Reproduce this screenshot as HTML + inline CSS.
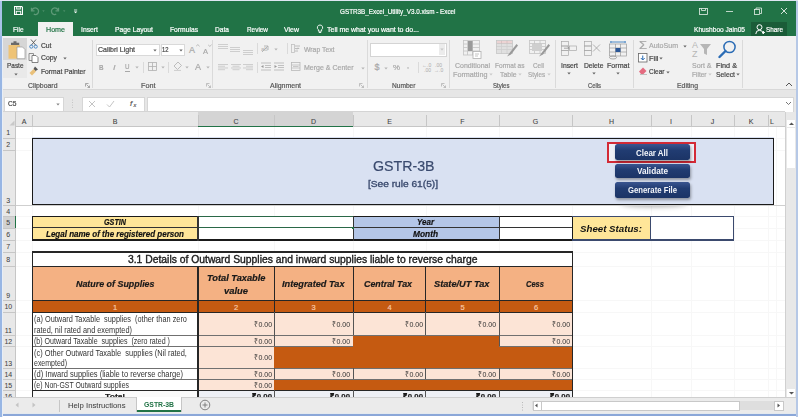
<!DOCTYPE html><html><head><meta charset="utf-8"><style>
html,body{margin:0;padding:0;width:798px;height:417px;overflow:hidden;background:#fff}
body{position:relative;font-family:"Liberation Sans",sans-serif}
.a{position:absolute}
.t{position:absolute;white-space:pre;-webkit-text-stroke:0.2px currentColor}
svg{position:absolute}
</style></head><body>
<div class="a" style="left:0px;top:0px;width:798px;height:417px;background:#ffffff;"></div>
<div class="a" style="left:0px;top:0px;width:798px;height:36px;background:#217346;"></div>
<div class="a" style="left:38px;top:22px;width:35px;height:14px;background:#f1f1f1;"></div>
<div class="a" style="left:751px;top:22px;width:36px;height:14px;background:#1a5c38;"></div>
<div class="a" style="left:0px;top:36px;width:798px;height:54px;background:#f1f1f1;"></div>
<div class="a" style="left:0px;top:89px;width:798px;height:1px;background:#d8d8d8;"></div>
<div class="a" style="left:0px;top:90px;width:798px;height:27px;background:#e6e6e6;"></div>
<div class="a" style="left:4px;top:96.5px;width:58px;height:14px;background:#fff;border:0.6px solid #d6d6d6"></div>
<div class="a" style="left:82px;top:96.5px;width:61px;height:14px;background:#fff;border:0.6px solid #d6d6d6"></div>
<div class="a" style="left:147px;top:96.5px;width:645px;height:14px;background:#fff;border:0.6px solid #d6d6d6"></div>
<div class="a" style="left:0px;top:113px;width:785px;height:13px;background:#f3f3f3;"></div>
<div class="a" style="left:0px;top:126px;width:785px;height:1px;background:#d4d4d4;"></div>
<div class="a" style="left:0px;top:126px;width:16px;height:272px;background:#f3f3f3;"></div>
<div class="a" style="left:15px;top:113px;width:1px;height:285px;background:#d4d4d4;"></div>
<div class="a" style="left:0px;top:397px;width:798px;height:16px;background:#f0f0f0;"></div>
<div class="a" style="left:0px;top:397px;width:798px;height:1px;background:#d4d4d4;"></div>
<div class="a" style="left:0px;top:413px;width:798px;height:2px;background:#8fa8d8;"></div>
<div class="a" style="left:0px;top:0px;width:1px;height:417px;background:#9ab6e4;"></div>
<div class="a" style="left:796px;top:0px;width:2px;height:417px;background:#9ab6e4;"></div>
<div class="a" style="left:16px;top:138px;width:769px;height:1px;background:#f7f7f7;"></div>
<div class="a" style="left:16px;top:150px;width:769px;height:1px;background:#f7f7f7;"></div>
<div class="a" style="left:16px;top:205px;width:769px;height:1px;background:#f7f7f7;"></div>
<div class="a" style="left:16px;top:216px;width:769px;height:1px;background:#f7f7f7;"></div>
<div class="a" style="left:16px;top:228px;width:769px;height:1px;background:#f7f7f7;"></div>
<div class="a" style="left:16px;top:240px;width:769px;height:1px;background:#f7f7f7;"></div>
<div class="a" style="left:16px;top:252px;width:769px;height:1px;background:#f7f7f7;"></div>
<div class="a" style="left:16px;top:266px;width:769px;height:1px;background:#f7f7f7;"></div>
<div class="a" style="left:16px;top:300px;width:769px;height:1px;background:#f7f7f7;"></div>
<div class="a" style="left:16px;top:312px;width:769px;height:1px;background:#f7f7f7;"></div>
<div class="a" style="left:16px;top:335px;width:769px;height:1px;background:#f7f7f7;"></div>
<div class="a" style="left:16px;top:346px;width:769px;height:1px;background:#f7f7f7;"></div>
<div class="a" style="left:16px;top:368px;width:769px;height:1px;background:#f7f7f7;"></div>
<div class="a" style="left:16px;top:379px;width:769px;height:1px;background:#f7f7f7;"></div>
<div class="a" style="left:16px;top:390px;width:769px;height:1px;background:#f7f7f7;"></div>
<div class="a" style="left:16px;top:402px;width:769px;height:1px;background:#f7f7f7;"></div>
<div class="a" style="left:32px;top:126px;width:1px;height:271px;background:#f7f7f7;"></div>
<div class="a" style="left:198px;top:126px;width:1px;height:271px;background:#f7f7f7;"></div>
<div class="a" style="left:274px;top:126px;width:1px;height:271px;background:#f7f7f7;"></div>
<div class="a" style="left:353px;top:126px;width:1px;height:271px;background:#f7f7f7;"></div>
<div class="a" style="left:426px;top:126px;width:1px;height:271px;background:#f7f7f7;"></div>
<div class="a" style="left:499px;top:126px;width:1px;height:271px;background:#f7f7f7;"></div>
<div class="a" style="left:572px;top:126px;width:1px;height:271px;background:#f7f7f7;"></div>
<div class="a" style="left:651px;top:126px;width:1px;height:271px;background:#f7f7f7;"></div>
<div class="a" style="left:691px;top:126px;width:1px;height:271px;background:#f7f7f7;"></div>
<div class="a" style="left:734px;top:126px;width:1px;height:271px;background:#f7f7f7;"></div>
<div class="a" style="left:768px;top:126px;width:1px;height:271px;background:#f7f7f7;"></div>
<div class="a" style="left:776px;top:126px;width:1px;height:271px;background:#f7f7f7;"></div>
<div class="a" style="left:620px;top:200px;width:68px;height:7px;border-radius:50%;background:rgba(0,0,0,0.3);filter:blur(2.5px)"></div>
<div class="a" style="left:0px;top:204.6px;width:785px;height:1px;background:#cfcfcf;"></div>
<div class="a" style="left:0px;top:111.2px;width:785px;height:0.8px;background:#d4d4d4;"></div>
<div class="a" style="left:16px;top:112px;width:769px;height:13.5px;background:#e8e8e8;"></div>
<div class="a" style="left:198px;top:112px;width:155px;height:13.5px;background:#d4d4d4;"></div>
<div class="a" style="left:198px;top:125.5px;width:155px;height:1.2px;background:#217346;"></div>
<div class="a" style="left:0px;top:125.6px;width:198px;height:1px;background:#c6c6c6;"></div>
<div class="a" style="left:353px;top:125.6px;width:432px;height:1px;background:#c6c6c6;"></div>
<div class="a" style="left:32px;top:115px;width:1px;height:10.5px;background:#c6c6c6;"></div>
<div class="t" style="left:21.67px;top:118.07px;font-size:7px;line-height:7px;color:#444;-webkit-text-stroke:0.1px currentColor;">A</div>
<div class="a" style="left:198px;top:115px;width:1px;height:10.5px;background:#c6c6c6;"></div>
<div class="t" style="left:112.67px;top:118.07px;font-size:7px;line-height:7px;color:#444;-webkit-text-stroke:0.1px currentColor;">B</div>
<div class="a" style="left:274px;top:115px;width:1px;height:10.5px;background:#c6c6c6;"></div>
<div class="t" style="left:233.47px;top:118.07px;font-size:7px;line-height:7px;color:#444;-webkit-text-stroke:0.1px currentColor;">C</div>
<div class="a" style="left:353px;top:115px;width:1px;height:10.5px;background:#c6c6c6;"></div>
<div class="t" style="left:310.97px;top:118.07px;font-size:7px;line-height:7px;color:#444;-webkit-text-stroke:0.1px currentColor;">D</div>
<div class="a" style="left:426px;top:115px;width:1px;height:10.5px;background:#c6c6c6;"></div>
<div class="t" style="left:387.17px;top:118.07px;font-size:7px;line-height:7px;color:#444;-webkit-text-stroke:0.1px currentColor;">E</div>
<div class="a" style="left:499px;top:115px;width:1px;height:10.5px;background:#c6c6c6;"></div>
<div class="t" style="left:460.36px;top:118.07px;font-size:7px;line-height:7px;color:#444;-webkit-text-stroke:0.1px currentColor;">F</div>
<div class="a" style="left:572px;top:115px;width:1px;height:10.5px;background:#c6c6c6;"></div>
<div class="t" style="left:532.78px;top:118.07px;font-size:7px;line-height:7px;color:#444;-webkit-text-stroke:0.1px currentColor;">G</div>
<div class="a" style="left:651px;top:115px;width:1px;height:10.5px;background:#c6c6c6;"></div>
<div class="t" style="left:608.97px;top:118.07px;font-size:7px;line-height:7px;color:#444;-webkit-text-stroke:0.1px currentColor;">H</div>
<div class="a" style="left:691px;top:115px;width:1px;height:10.5px;background:#c6c6c6;"></div>
<div class="t" style="left:670.03px;top:118.07px;font-size:7px;line-height:7px;color:#444;-webkit-text-stroke:0.1px currentColor;">I</div>
<div class="a" style="left:734px;top:115px;width:1px;height:10.5px;background:#c6c6c6;"></div>
<div class="t" style="left:710.75px;top:118.07px;font-size:7px;line-height:7px;color:#444;-webkit-text-stroke:0.1px currentColor;">J</div>
<div class="a" style="left:768px;top:115px;width:1px;height:10.5px;background:#c6c6c6;"></div>
<div class="t" style="left:748.67px;top:118.07px;font-size:7px;line-height:7px;color:#444;-webkit-text-stroke:0.1px currentColor;">K</div>
<div class="t" style="left:770.05px;top:118.07px;font-size:7px;line-height:7px;color:#444;-webkit-text-stroke:0.1px currentColor;">L</div>
<div class="a" style="left:0px;top:112px;width:16px;height:285px;background:#e8e8e8;"></div>
<div class="a" style="left:15px;top:112px;width:1px;height:285px;background:#c6c6c6;"></div>
<div class="a" style="left:0px;top:216px;width:16px;height:12px;background:#d2d2d2;"></div>
<div class="a" style="left:15px;top:216px;width:1px;height:12px;background:#217346;"></div>
<div class="a" style="left:0px;top:138px;width:15px;height:1px;background:#c6c6c6;"></div>
<div class="t" style="left:6.35px;top:129.27px;font-size:7px;line-height:7px;color:#444;-webkit-text-stroke:0.05px currentColor;">1</div>
<div class="a" style="left:0px;top:150px;width:15px;height:1px;background:#c6c6c6;"></div>
<div class="t" style="left:6.35px;top:141.27px;font-size:7px;line-height:7px;color:#444;-webkit-text-stroke:0.05px currentColor;">2</div>
<div class="a" style="left:0px;top:205px;width:15px;height:1px;background:#c6c6c6;"></div>
<div class="t" style="left:6.35px;top:197.07px;font-size:7px;line-height:7px;color:#444;-webkit-text-stroke:0.05px currentColor;">3</div>
<div class="a" style="left:0px;top:216px;width:15px;height:1px;background:#c6c6c6;"></div>
<div class="t" style="left:6.35px;top:207.77px;font-size:7px;line-height:7px;color:#444;-webkit-text-stroke:0.05px currentColor;">4</div>
<div class="a" style="left:0px;top:228px;width:15px;height:1px;background:#c6c6c6;"></div>
<div class="t" style="left:6.35px;top:219.27px;font-size:7px;line-height:7px;color:#444;-webkit-text-stroke:0.05px currentColor;">5</div>
<div class="a" style="left:0px;top:240px;width:15px;height:1px;background:#c6c6c6;"></div>
<div class="t" style="left:6.35px;top:231.27px;font-size:7px;line-height:7px;color:#444;-webkit-text-stroke:0.05px currentColor;">6</div>
<div class="a" style="left:0px;top:252px;width:15px;height:1px;background:#c6c6c6;"></div>
<div class="t" style="left:6.35px;top:243.27px;font-size:7px;line-height:7px;color:#444;-webkit-text-stroke:0.05px currentColor;">7</div>
<div class="a" style="left:0px;top:266px;width:15px;height:1px;background:#c6c6c6;"></div>
<div class="t" style="left:6.35px;top:256.27px;font-size:7px;line-height:7px;color:#444;-webkit-text-stroke:0.05px currentColor;">8</div>
<div class="a" style="left:0px;top:300px;width:15px;height:1px;background:#c6c6c6;"></div>
<div class="t" style="left:6.35px;top:292.07px;font-size:7px;line-height:7px;color:#444;-webkit-text-stroke:0.05px currentColor;">9</div>
<div class="a" style="left:0px;top:312px;width:15px;height:1px;background:#c6c6c6;"></div>
<div class="t" style="left:4.41px;top:303.27px;font-size:7px;line-height:7px;color:#444;-webkit-text-stroke:0.05px currentColor;">10</div>
<div class="a" style="left:0px;top:335px;width:15px;height:1px;background:#c6c6c6;"></div>
<div class="t" style="left:4.67px;top:327.07px;font-size:7px;line-height:7px;color:#444;-webkit-text-stroke:0.05px currentColor;">11</div>
<div class="a" style="left:0px;top:346px;width:15px;height:1px;background:#c6c6c6;"></div>
<div class="t" style="left:4.41px;top:337.77px;font-size:7px;line-height:7px;color:#444;-webkit-text-stroke:0.05px currentColor;">12</div>
<div class="a" style="left:0px;top:368px;width:15px;height:1px;background:#c6c6c6;"></div>
<div class="t" style="left:4.41px;top:360.07px;font-size:7px;line-height:7px;color:#444;-webkit-text-stroke:0.05px currentColor;">13</div>
<div class="a" style="left:0px;top:379px;width:15px;height:1px;background:#c6c6c6;"></div>
<div class="t" style="left:4.41px;top:370.77px;font-size:7px;line-height:7px;color:#444;-webkit-text-stroke:0.05px currentColor;">14</div>
<div class="a" style="left:0px;top:390px;width:15px;height:1px;background:#c6c6c6;"></div>
<div class="t" style="left:4.41px;top:381.77px;font-size:7px;line-height:7px;color:#444;-webkit-text-stroke:0.05px currentColor;">15</div>
<div class="a" style="left:0px;top:402px;width:15px;height:1px;background:#c6c6c6;"></div>
<div class="t" style="left:4.41px;top:393.27px;font-size:7px;line-height:7px;color:#444;-webkit-text-stroke:0.05px currentColor;">16</div>
<div class="a" style="left:32px;top:137px;width:742px;height:68px;background:#d9e1f2;"></div>
<div class="a" style="left:32px;top:138px;width:742px;height:1.3px;background:#1a1a1a;"></div>
<div class="a" style="left:32px;top:203.5px;width:742px;height:1.3px;background:#1a1a1a;"></div>
<div class="a" style="left:32px;top:138px;width:1.3px;height:66.8px;background:#1a1a1a;"></div>
<div class="a" style="left:772.7px;top:138px;width:1.3px;height:66.8px;background:#1a1a1a;"></div>
<svg style="left:9px;top:120px" width="6" height="6" viewBox="0 0 6 6"><path d="M5.5 0.5v5h-5z" fill="#c8c8c8"/></svg>
<div class="t" style="left:372.75px;top:158.85px;font-size:14px;line-height:14px;color:#3a4a6e;transform:scaleX(1.0135);transform-origin:0 0;">GSTR-3B</div>
<div class="t" style="left:368.30px;top:179.46px;font-size:9.5px;line-height:9.5px;color:#3a4a6e;-webkit-text-stroke:0.35px currentColor;transform:scaleX(1.0690);transform-origin:0 0;">[See rule 61(5)]</div>
<div class="a" style="left:607.3px;top:142px;width:84.5px;height:16.5px;border:2px solid #d32a36;background:#eef0f7"></div>
<div class="a" style="left:614.8px;top:144.4px;width:75.2px;height:15.8px;border-radius:2.5px;background:linear-gradient(#3a5590,#213c72 40%,#1c3466);box-shadow:1px 2px 3px rgba(0,0,0,0.35)"></div>
<div class="t" style="left:636.40px;top:148.58px;font-size:9px;line-height:9px;color:#f4f6fb;-webkit-text-stroke:0px currentColor;font-weight:bold;transform:scaleX(0.8845);transform-origin:0 0;">Clear All</div>
<div class="a" style="left:614.8px;top:164.2px;width:75.2px;height:13.6px;border-radius:2.5px;background:linear-gradient(#3a5590,#213c72 40%,#1c3466);box-shadow:1px 2px 3px rgba(0,0,0,0.35)"></div>
<div class="t" style="left:636.90px;top:167.28px;font-size:9px;line-height:9px;color:#f4f6fb;-webkit-text-stroke:0px currentColor;font-weight:bold;transform:scaleX(0.9112);transform-origin:0 0;">Validate</div>
<div class="a" style="left:614.8px;top:182px;width:75.2px;height:16.0px;border-radius:2.5px;background:linear-gradient(#3a5590,#213c72 40%,#1c3466);box-shadow:1px 2px 3px rgba(0,0,0,0.35)"></div>
<div class="t" style="left:627.90px;top:186.28px;font-size:9px;line-height:9px;color:#f4f6fb;-webkit-text-stroke:0px currentColor;font-weight:bold;transform:scaleX(0.8593);transform-origin:0 0;">Generate File</div>
<div class="a" style="left:32px;top:216px;width:166px;height:24px;background:#ffe699;"></div>
<div class="a" style="left:198px;top:216px;width:155px;height:24px;background:#fff;"></div>
<div class="a" style="left:353px;top:216px;width:146px;height:24px;background:#b4c6e7;"></div>
<div class="a" style="left:499px;top:216px;width:73px;height:24px;background:#fff;"></div>
<div class="a" style="left:572px;top:216px;width:78px;height:24px;background:#ffe699;"></div>
<div class="a" style="left:650px;top:216px;width:84px;height:24px;background:#fff;"></div>
<div class="a" style="left:32px;top:216px;width:541px;height:1.3px;background:#1a1a1a;"></div>
<div class="a" style="left:32px;top:239.4px;width:541px;height:1.2px;background:#1a1a1a;"></div>
<div class="a" style="left:32px;top:227px;width:541px;height:1.2px;background:#333;"></div>
<div class="a" style="left:32px;top:216px;width:1.4px;height:24.7px;background:#1a1a1a;"></div>
<div class="a" style="left:197.3px;top:216px;width:1.3px;height:24.7px;background:#333;"></div>
<div class="a" style="left:353px;top:216px;width:1.1px;height:24.7px;background:#333;"></div>
<div class="a" style="left:499px;top:216px;width:1.1px;height:24.7px;background:#333;"></div>
<div class="a" style="left:571.5px;top:216px;width:1.3px;height:24.7px;background:#1a1a1a;"></div>
<div class="a" style="left:572px;top:216px;width:162px;height:1.3px;background:#3b4a6e;"></div>
<div class="a" style="left:572px;top:239.4px;width:162px;height:1.3px;background:#3b4a6e;"></div>
<div class="a" style="left:733px;top:216px;width:1.4px;height:24.7px;background:#3b4a6e;"></div>
<div class="a" style="left:650px;top:216px;width:1.1px;height:24.7px;background:#3b4a6e;"></div>
<div class="a" style="left:198.6px;top:216px;width:154.4px;height:1.3px;background:#2a6848;"></div>
<div class="a" style="left:198.6px;top:227px;width:154.4px;height:1.2px;background:#2a6848;"></div>
<div class="a" style="left:351.5px;top:226.5px;width:2.5px;height:2.5px;background:#217346;"></div>
<div class="t" style="left:104.00px;top:217.80px;font-size:8.5px;line-height:8.5px;color:#111;font-weight:bold;font-style:italic;transform:scaleX(0.8470);transform-origin:0 0;">GSTIN</div>
<div class="t" style="left:46.00px;top:229.80px;font-size:8.5px;line-height:8.5px;color:#111;font-weight:bold;font-style:italic;transform:scaleX(0.9424);transform-origin:0 0;">Legal name of the registered person</div>
<div class="t" style="left:417.00px;top:217.80px;font-size:8.5px;line-height:8.5px;color:#111;font-weight:bold;font-style:italic;transform:scaleX(0.9383);transform-origin:0 0;">Year</div>
<div class="t" style="left:413.00px;top:229.80px;font-size:8.5px;line-height:8.5px;color:#111;font-weight:bold;font-style:italic;transform:scaleX(0.9808);transform-origin:0 0;">Month</div>
<div class="t" style="left:580.00px;top:224.58px;font-size:9px;line-height:9px;color:#111;-webkit-text-stroke:0px currentColor;font-weight:bold;font-style:italic;transform:scaleX(1.0780);transform-origin:0 0;">Sheet Status:</div>
<div class="a" style="left:32px;top:252px;width:541px;height:14px;background:#fff;"></div>
<div class="a" style="left:32px;top:266px;width:541px;height:34px;background:#f4b183;"></div>
<div class="a" style="left:32px;top:300px;width:541px;height:12px;background:#c55a11;"></div>
<div class="a" style="left:32px;top:312px;width:166px;height:23px;background:#fff;"></div>
<div class="a" style="left:198px;top:312px;width:375px;height:23px;background:#fce4d6;"></div>
<div class="a" style="left:32px;top:335px;width:166px;height:11px;background:#fff;"></div>
<div class="a" style="left:198px;top:335px;width:375px;height:11px;background:#fce4d6;"></div>
<div class="a" style="left:32px;top:346px;width:166px;height:22px;background:#fff;"></div>
<div class="a" style="left:198px;top:346px;width:375px;height:22px;background:#fce4d6;"></div>
<div class="a" style="left:32px;top:368px;width:166px;height:11px;background:#fff;"></div>
<div class="a" style="left:198px;top:368px;width:375px;height:11px;background:#fce4d6;"></div>
<div class="a" style="left:32px;top:379px;width:166px;height:11px;background:#fff;"></div>
<div class="a" style="left:198px;top:379px;width:375px;height:11px;background:#fce4d6;"></div>
<div class="a" style="left:353px;top:335px;width:146px;height:11px;background:#c55a11;"></div>
<div class="a" style="left:274px;top:346px;width:299px;height:22px;background:#c55a11;"></div>
<div class="a" style="left:274px;top:379px;width:299px;height:11px;background:#c55a11;"></div>
<div class="a" style="left:32px;top:390px;width:166px;height:8px;background:#fafafa;"></div>
<div class="a" style="left:198px;top:390px;width:375px;height:8px;background:#eef0f5;"></div>
<div class="a" style="left:32px;top:251px;width:541px;height:1.8px;background:#262626;"></div>
<div class="a" style="left:32px;top:265.8px;width:541px;height:1.3px;background:#262626;"></div>
<div class="a" style="left:32px;top:299.6px;width:541px;height:1.5px;background:#262626;"></div>
<div class="a" style="left:32px;top:311.5px;width:541px;height:1.3px;background:#262626;"></div>
<div class="a" style="left:32px;top:335px;width:541px;height:1px;background:#707070;"></div>
<div class="a" style="left:32px;top:346px;width:541px;height:1px;background:#707070;"></div>
<div class="a" style="left:32px;top:368px;width:541px;height:1px;background:#707070;"></div>
<div class="a" style="left:32px;top:379px;width:541px;height:1px;background:#707070;"></div>
<div class="a" style="left:353px;top:346px;width:146px;height:1px;background:#c55a11;"></div>
<div class="a" style="left:32px;top:389.6px;width:541px;height:1.6px;background:#262626;"></div>
<div class="a" style="left:32px;top:251px;width:1.3px;height:147px;background:#262626;"></div>
<div class="a" style="left:571.5px;top:251px;width:1.5px;height:147px;background:#262626;"></div>
<div class="a" style="left:197px;top:266px;width:1.8px;height:132px;background:#262626;"></div>
<div class="a" style="left:274px;top:266px;width:1.4px;height:46px;background:#262626;"></div>
<div class="a" style="left:353px;top:266px;width:1.4px;height:46px;background:#262626;"></div>
<div class="a" style="left:425px;top:266px;width:1.4px;height:46px;background:#262626;"></div>
<div class="a" style="left:499px;top:266px;width:1.4px;height:46px;background:#262626;"></div>
<div class="a" style="left:274px;top:312px;width:1px;height:34px;background:#555;"></div>
<div class="a" style="left:274px;top:368px;width:1px;height:11px;background:#555;"></div>
<div class="a" style="left:274px;top:390px;width:1px;height:8px;background:#555;"></div>
<div class="a" style="left:353px;top:312px;width:1px;height:23px;background:#555;"></div>
<div class="a" style="left:353px;top:368px;width:1px;height:11px;background:#555;"></div>
<div class="a" style="left:353px;top:390px;width:1px;height:8px;background:#555;"></div>
<div class="a" style="left:425px;top:312px;width:1px;height:23px;background:#555;"></div>
<div class="a" style="left:425px;top:368px;width:1px;height:11px;background:#555;"></div>
<div class="a" style="left:425px;top:390px;width:1px;height:8px;background:#555;"></div>
<div class="a" style="left:499px;top:312px;width:1px;height:34px;background:#555;"></div>
<div class="a" style="left:499px;top:368px;width:1px;height:11px;background:#555;"></div>
<div class="a" style="left:499px;top:390px;width:1px;height:8px;background:#555;"></div>
<div class="t" style="left:127.75px;top:254.53px;font-size:10px;line-height:10px;color:#1a1a1a;-webkit-text-stroke:0.35px currentColor;transform:scaleX(1.0341);transform-origin:0 0;">3.1 Details of Outward Supplies and inward supplies liable to reverse charge</div>
<div class="t" style="left:75.75px;top:280.38px;font-size:9px;line-height:9px;color:#1a1a1a;font-weight:bold;font-style:italic;transform:scaleX(0.9873);transform-origin:0 0;">Nature of Supplies</div>
<div class="t" style="left:206.75px;top:274.38px;font-size:9px;line-height:9px;color:#1a1a1a;font-weight:bold;font-style:italic;transform:scaleX(1.0290);transform-origin:0 0;">Total Taxable</div>
<div class="t" style="left:224.00px;top:286.58px;font-size:9px;line-height:9px;color:#1a1a1a;font-weight:bold;font-style:italic;transform:scaleX(1.0428);transform-origin:0 0;">value</div>
<div class="t" style="left:281.75px;top:280.38px;font-size:9px;line-height:9px;color:#1a1a1a;font-weight:bold;font-style:italic;transform:scaleX(1.0215);transform-origin:0 0;">Integrated Tax</div>
<div class="t" style="left:364.00px;top:280.38px;font-size:9px;line-height:9px;color:#1a1a1a;font-weight:bold;font-style:italic;transform:scaleX(0.9860);transform-origin:0 0;">Central Tax</div>
<div class="t" style="left:433.75px;top:280.38px;font-size:9px;line-height:9px;color:#1a1a1a;font-weight:bold;font-style:italic;transform:scaleX(1.0243);transform-origin:0 0;">State/UT Tax</div>
<div class="t" style="left:526.00px;top:280.38px;font-size:9px;line-height:9px;color:#1a1a1a;font-weight:bold;font-style:italic;transform:scaleX(0.8366);transform-origin:0 0;">Cess</div>
<div class="t" style="left:112.91px;top:303.85px;font-size:7.5px;line-height:7.5px;color:#f8c8a8;">1</div>
<div class="t" style="left:233.91px;top:303.85px;font-size:7.5px;line-height:7.5px;color:#f8c8a8;">2</div>
<div class="t" style="left:311.41px;top:303.85px;font-size:7.5px;line-height:7.5px;color:#f8c8a8;">3</div>
<div class="t" style="left:387.41px;top:303.85px;font-size:7.5px;line-height:7.5px;color:#f8c8a8;">4</div>
<div class="t" style="left:460.41px;top:303.85px;font-size:7.5px;line-height:7.5px;color:#f8c8a8;">5</div>
<div class="t" style="left:533.91px;top:303.85px;font-size:7.5px;line-height:7.5px;color:#f8c8a8;">6</div>
<div class="t" style="left:34.00px;top:315.05px;font-size:8.8px;line-height:8.8px;color:#333333;-webkit-text-stroke:0px currentColor;transform:scaleX(0.8348);transform-origin:0 0;">(a) Outward Taxable  supplies  (other than zero</div>
<div class="t" style="left:34.00px;top:325.55px;font-size:8.8px;line-height:8.8px;color:#333333;-webkit-text-stroke:0px currentColor;transform:scaleX(0.8347);transform-origin:0 0;">rated, nil rated and exempted)</div>
<div class="t" style="left:34.00px;top:337.05px;font-size:8.8px;line-height:8.8px;color:#333333;-webkit-text-stroke:0px currentColor;transform:scaleX(0.8044);transform-origin:0 0;">(b) Outward Taxable  supplies  (zero rated )</div>
<div class="t" style="left:34.00px;top:348.55px;font-size:8.8px;line-height:8.8px;color:#333333;-webkit-text-stroke:0px currentColor;transform:scaleX(0.8462);transform-origin:0 0;">(c) Other Outward Taxable  supplies (Nil rated,</div>
<div class="t" style="left:34.00px;top:359.05px;font-size:8.8px;line-height:8.8px;color:#333333;-webkit-text-stroke:0px currentColor;transform:scaleX(0.7937);transform-origin:0 0;">exempted)</div>
<div class="t" style="left:34.00px;top:370.05px;font-size:8.8px;line-height:8.8px;color:#333333;-webkit-text-stroke:0px currentColor;transform:scaleX(0.8557);transform-origin:0 0;">(d) Inward supplies (liable to reverse charge)</div>
<div class="t" style="left:34.00px;top:381.05px;font-size:8.8px;line-height:8.8px;color:#333333;-webkit-text-stroke:0px currentColor;transform:scaleX(0.7875);transform-origin:0 0;">(e) Non-GST Outward supplies</div>
<div class="t" style="left:254.00px;top:320.73px;font-size:8px;line-height:8px;color:#333;-webkit-text-stroke:0px currentColor;transform:scaleX(0.8808);transform-origin:0 0;">₹0.00</div>
<div class="t" style="left:332.00px;top:320.73px;font-size:8px;line-height:8px;color:#333;-webkit-text-stroke:0px currentColor;transform:scaleX(0.8808);transform-origin:0 0;">₹0.00</div>
<div class="t" style="left:405.00px;top:320.73px;font-size:8px;line-height:8px;color:#333;-webkit-text-stroke:0px currentColor;transform:scaleX(0.8808);transform-origin:0 0;">₹0.00</div>
<div class="t" style="left:478.00px;top:320.73px;font-size:8px;line-height:8px;color:#333;-webkit-text-stroke:0px currentColor;transform:scaleX(0.8808);transform-origin:0 0;">₹0.00</div>
<div class="t" style="left:552.00px;top:320.73px;font-size:8px;line-height:8px;color:#333;-webkit-text-stroke:0px currentColor;transform:scaleX(0.8808);transform-origin:0 0;">₹0.00</div>
<div class="t" style="left:254.00px;top:337.53px;font-size:8px;line-height:8px;color:#333;-webkit-text-stroke:0px currentColor;transform:scaleX(0.8808);transform-origin:0 0;">₹0.00</div>
<div class="t" style="left:332.00px;top:337.53px;font-size:8px;line-height:8px;color:#333;-webkit-text-stroke:0px currentColor;transform:scaleX(0.8808);transform-origin:0 0;">₹0.00</div>
<div class="t" style="left:552.00px;top:337.53px;font-size:8px;line-height:8px;color:#333;-webkit-text-stroke:0px currentColor;transform:scaleX(0.8808);transform-origin:0 0;">₹0.00</div>
<div class="t" style="left:254.00px;top:353.73px;font-size:8px;line-height:8px;color:#333;-webkit-text-stroke:0px currentColor;transform:scaleX(0.8808);transform-origin:0 0;">₹0.00</div>
<div class="t" style="left:254.00px;top:370.73px;font-size:8px;line-height:8px;color:#333;-webkit-text-stroke:0px currentColor;transform:scaleX(0.8808);transform-origin:0 0;">₹0.00</div>
<div class="t" style="left:332.00px;top:370.73px;font-size:8px;line-height:8px;color:#333;-webkit-text-stroke:0px currentColor;transform:scaleX(0.8808);transform-origin:0 0;">₹0.00</div>
<div class="t" style="left:405.00px;top:370.73px;font-size:8px;line-height:8px;color:#333;-webkit-text-stroke:0px currentColor;transform:scaleX(0.8808);transform-origin:0 0;">₹0.00</div>
<div class="t" style="left:478.00px;top:370.73px;font-size:8px;line-height:8px;color:#333;-webkit-text-stroke:0px currentColor;transform:scaleX(0.8808);transform-origin:0 0;">₹0.00</div>
<div class="t" style="left:552.00px;top:370.73px;font-size:8px;line-height:8px;color:#333;-webkit-text-stroke:0px currentColor;transform:scaleX(0.8808);transform-origin:0 0;">₹0.00</div>
<div class="t" style="left:254.00px;top:381.73px;font-size:8px;line-height:8px;color:#333;-webkit-text-stroke:0px currentColor;transform:scaleX(0.8808);transform-origin:0 0;">₹0.00</div>
<div class="t" style="left:105.00px;top:393.23px;font-size:8px;line-height:8px;color:#1a1a1a;font-weight:bold;transform:scaleX(1.0801);transform-origin:0 0;">Total</div>
<div class="t" style="left:252.00px;top:393.23px;font-size:8px;line-height:8px;color:#1a1a1a;font-weight:bold;transform:scaleX(0.9735);transform-origin:0 0;">₹0.00</div>
<div class="t" style="left:330.00px;top:393.23px;font-size:8px;line-height:8px;color:#1a1a1a;font-weight:bold;transform:scaleX(0.9735);transform-origin:0 0;">₹0.00</div>
<div class="t" style="left:403.00px;top:393.23px;font-size:8px;line-height:8px;color:#1a1a1a;font-weight:bold;transform:scaleX(0.9735);transform-origin:0 0;">₹0.00</div>
<div class="t" style="left:476.00px;top:393.23px;font-size:8px;line-height:8px;color:#1a1a1a;font-weight:bold;transform:scaleX(0.9735);transform-origin:0 0;">₹0.00</div>
<div class="t" style="left:550.00px;top:393.23px;font-size:8px;line-height:8px;color:#1a1a1a;font-weight:bold;transform:scaleX(0.9735);transform-origin:0 0;">₹0.00</div>
<svg style="left:14px;top:6.3px" width="9" height="9" viewBox="0 0 9 9"><path d="M0.55 0.55h7.1l0.8 0.8v7.1h-7.9z" fill="none" stroke="#fff" stroke-width="1.1"/><rect x="2.2" y="0.5" width="4.6" height="3" fill="#fff"/><rect x="3" y="1.2" width="3" height="1.4" fill="#5a9a76"/><rect x="2.3" y="5.3" width="4.4" height="3.2" fill="none" stroke="#fff" stroke-width="0.9"/></svg>
<svg style="left:30px;top:6px" width="50" height="10" viewBox="0 0 50 10"><g fill="none" stroke="#5f9a78" stroke-width="1.3"><path d="M1.5 1.8v3h3"/><path d="M2 4.6a3.3 3.3 0 1 1 1.8 3.6"/><path d="M28.5 1.8v3h-3"/><path d="M28 4.6a3.3 3.3 0 1 0 -1.8 3.6"/></g><path d="M12.3 4.5h2.4l-1.2 1.3z M33 4.5h2.4l-1.2 1.3z" fill="#5f9a78"/><path d="M44 4h3.2" stroke="#fff" stroke-width="0.8"/><path d="M43.8 5.5h3.6l-1.8 1.8z" fill="#fff"/></svg>
<div class="t" style="left:340.05px;top:8.15px;font-size:7.5px;line-height:7.5px;color:#ffffff;transform:scaleX(0.8423);transform-origin:0 0;">GSTR3B_Excel_Utility_V3.0.xlsm - Excel</div>
<svg style="left:698px;top:6px" width="92" height="10" viewBox="0 0 92 10"><g fill="none" stroke="#e8f0ea" stroke-width="0.8"><rect x="1.5" y="2.5" width="8" height="6"/><path d="M3.5 2.5v2h4v-2" fill="none"/><path d="M28 5.5h7"/><rect x="56.5" y="3.5" width="5" height="5"/><path d="M58 3.5v-1.5h5.5v5.5h-1.5"/><path d="M83 2l6 6M89 2l-6 6" stroke-width="0.9"/></g></svg>
<div class="t" style="left:12.75px;top:25.65px;font-size:7.5px;line-height:7.5px;color:#ffffff;transform:scaleX(0.8688);transform-origin:0 0;">File</div>
<div class="t" style="left:45.50px;top:25.65px;font-size:7.5px;line-height:7.5px;color:#217346;transform:scaleX(0.9497);transform-origin:0 0;">Home</div>
<div class="t" style="left:81.00px;top:25.65px;font-size:7.5px;line-height:7.5px;color:#ffffff;transform:scaleX(0.9063);transform-origin:0 0;">Insert</div>
<div class="t" style="left:115.00px;top:25.65px;font-size:7.5px;line-height:7.5px;color:#ffffff;transform:scaleX(0.9022);transform-origin:0 0;">Page Layout</div>
<div class="t" style="left:170.00px;top:25.65px;font-size:7.5px;line-height:7.5px;color:#ffffff;transform:scaleX(0.8958);transform-origin:0 0;">Formulas</div>
<div class="t" style="left:215.00px;top:25.65px;font-size:7.5px;line-height:7.5px;color:#ffffff;transform:scaleX(0.8837);transform-origin:0 0;">Data</div>
<div class="t" style="left:247.00px;top:25.65px;font-size:7.5px;line-height:7.5px;color:#ffffff;transform:scaleX(0.8539);transform-origin:0 0;">Review</div>
<div class="t" style="left:284.00px;top:25.65px;font-size:7.5px;line-height:7.5px;color:#ffffff;transform:scaleX(0.9304);transform-origin:0 0;">View</div>
<svg style="left:316px;top:24px" width="8" height="10" viewBox="0 0 8 10"><path d="M4 1a2.6 2.6 0 0 1 1.6 4.7v1.5h-3.2v-1.5a2.6 2.6 0 0 1 1.6-4.7z" fill="none" stroke="#fff" stroke-width="0.9"/><path d="M2.8 8.5h2.4" stroke="#fff" stroke-width="0.9"/></svg>
<div class="t" style="left:327.00px;top:25.65px;font-size:7.5px;line-height:7.5px;color:#ffffff;transform:scaleX(0.9312);transform-origin:0 0;">Tell me what you want to do...</div>
<div class="t" style="left:694.00px;top:25.65px;font-size:7.5px;line-height:7.5px;color:#ffffff;transform:scaleX(0.8798);transform-origin:0 0;">Khushboo Jain05</div>
<svg style="left:755px;top:24px" width="10" height="11" viewBox="0 0 10 11"><circle cx="4.5" cy="3.2" r="2.5" fill="none" stroke="#fff" stroke-width="1"/><path d="M0.8 10a3.7 3.7 0 0 1 7.4 0" fill="none" stroke="#fff" stroke-width="1"/><path d="M7 8.5h3M8.5 7v3" stroke="#fff" stroke-width="0.9"/></svg>
<div class="t" style="left:765.80px;top:25.65px;font-size:7.5px;line-height:7.5px;color:#ffffff;transform:scaleX(0.8494);transform-origin:0 0;">Share</div>
<div class="a" style="left:92px;top:40px;width:1px;height:48px;background:#dadada;"></div>
<div class="a" style="left:212px;top:40px;width:1px;height:48px;background:#dadada;"></div>
<div class="a" style="left:367px;top:40px;width:1px;height:48px;background:#dadada;"></div>
<div class="a" style="left:449px;top:40px;width:1px;height:48px;background:#dadada;"></div>
<div class="a" style="left:555px;top:40px;width:1px;height:48px;background:#dadada;"></div>
<div class="a" style="left:633px;top:40px;width:1px;height:48px;background:#dadada;"></div>
<div class="a" style="left:742px;top:40px;width:1px;height:48px;background:#dadada;"></div>
<div class="a" style="left:3px;top:38px;width:24px;height:22px;background:#d6d6d6;"></div>
<div class="a" style="left:3px;top:60px;width:24px;height:18px;background:#e9e9e9;"></div>
<svg style="left:8px;top:39px" width="19" height="21" viewBox="0 0 19 21"><rect x="0.5" y="6" width="11.5" height="13.7" fill="#eec376"/><path d="M3 6v-2.2h2.5v-1.5h3v1.5h2.7v2.2z" fill="#6a6a6a"/><path d="M9 8h5.5l2.5 2.5v9.2h-8z" fill="#fff" stroke="#9a9a9a" stroke-width="0.7"/></svg>
<div class="t" style="left:7.25px;top:61.55px;font-size:7.5px;line-height:7.5px;color:#444444;transform:scaleX(0.8603);transform-origin:0 0;">Paste</div>
<svg style="left:13.5px;top:72.5px" width="4" height="3" viewBox="0 0 4 3"><path d="M0.3 0.6h3.4l-1.7 1.8z" fill="#444444" opacity="0.8"/></svg>
<svg style="left:29px;top:39px" width="9" height="10" viewBox="0 0 9 10"><path d="M2 0.5l5 6M7 0.5l-5 6" stroke="#555" stroke-width="0.9" fill="none"/><circle cx="2.3" cy="7.6" r="1.6" fill="none" stroke="#3d7fc1" stroke-width="0.9"/><circle cx="6.7" cy="7.6" r="1.6" fill="none" stroke="#3d7fc1" stroke-width="0.9"/></svg>
<div class="t" style="left:41.00px;top:41.65px;font-size:7.5px;line-height:7.5px;color:#444444;transform:scaleX(0.8996);transform-origin:0 0;">Cut</div>
<svg style="left:28px;top:53px" width="11" height="10" viewBox="0 0 11 10"><path d="M1 0.5h4.5v7h-4.5z" fill="none" stroke="#777" stroke-width="0.8"/><path d="M4 2.5h4l2 2v5h-6z" fill="#fff" stroke="#666" stroke-width="0.8"/></svg>
<div class="t" style="left:41.00px;top:54.25px;font-size:7.5px;line-height:7.5px;color:#444444;transform:scaleX(0.9138);transform-origin:0 0;">Copy</div>
<svg style="left:62.5px;top:57px" width="4" height="3" viewBox="0 0 4 3"><path d="M0.3 0.6h3.4l-1.7 1.8z" fill="#444444" opacity="0.8"/></svg>
<svg style="left:29px;top:66px" width="10" height="10" viewBox="0 0 10 10"><path d="M6 0.5l3 3-2.5 1.5-2-2z" fill="#555"/><path d="M4.5 3l2.5 2.5-4 4-2.5-2.5z" fill="#e9c07a"/></svg>
<div class="t" style="left:41.00px;top:67.65px;font-size:7.5px;line-height:7.5px;color:#444444;transform:scaleX(0.8972);transform-origin:0 0;">Format Painter</div>
<div class="t" style="left:27.55px;top:81.65px;font-size:7.5px;line-height:7.5px;color:#555555;transform:scaleX(0.9189);transform-origin:0 0;">Clipboard</div>
<svg style="left:85px;top:83px" width="5" height="5" viewBox="0 0 5 5"><path d="M0.5 0.5h3M0.5 0.5v3M1.5 1.5l3 3M4.5 2.5v2h-2" stroke="#888" stroke-width="0.7" fill="none"/></svg>
<div class="a" style="left:95.5px;top:43.5px;width:62.5px;height:10.5px;background:#fff;border:1px solid #d9d9d9"></div>
<div class="a" style="left:160.5px;top:43.5px;width:22.5px;height:10.5px;background:#fff;border:1px solid #d9d9d9"></div>
<div class="t" style="left:97.50px;top:45.85px;font-size:7.5px;line-height:7.5px;color:#444444;transform:scaleX(0.9343);transform-origin:0 0;">Calibri Light</div>
<svg style="left:153px;top:48.5px" width="4" height="3" viewBox="0 0 4 3"><path d="M0.3 0.6h3.4l-1.7 1.8z" fill="#444444" opacity="0.8"/></svg>
<div class="t" style="left:162.00px;top:46.15px;font-size:7.5px;line-height:7.5px;color:#444444;transform:scaleX(0.7791);transform-origin:0 0;">12</div>
<svg style="left:178.5px;top:48.5px" width="4" height="3" viewBox="0 0 4 3"><path d="M0.3 0.6h3.4l-1.7 1.8z" fill="#444444" opacity="0.8"/></svg>
<div class="t" style="left:189.00px;top:46.38px;font-size:9px;line-height:9px;color:#a8a8a8;">A</div>
<div class="t" style="left:202.50px;top:48.07px;font-size:7px;line-height:7px;color:#a8a8a8;transform:scaleX(1.0708);transform-origin:0 0;">A</div>
<svg style="left:196px;top:44px" width="4" height="3" viewBox="0 0 4 3"><path d="M0 2.5l1.8-2 1.8 2" stroke="#aaa" stroke-width="0.7" fill="none"/></svg>
<svg style="left:208px;top:44px" width="4" height="3" viewBox="0 0 4 3"><path d="M0 0.5l1.8 2 1.8-2" stroke="#aaa" stroke-width="0.7" fill="none"/></svg>
<div class="t" style="left:98.75px;top:63.65px;font-size:7.5px;line-height:7.5px;color:#a8a8a8;font-weight:bold;transform:scaleX(0.8308);transform-origin:0 0;">B</div>
<div class="t" style="left:112.75px;top:63.65px;font-size:7.5px;line-height:7.5px;color:#a8a8a8;font-style:italic;transform:scaleX(1.1999);transform-origin:0 0;">I</div>
<div class="t" style="left:125.05px;top:62.65px;font-size:7.5px;line-height:7.5px;color:#a8a8a8;transform:scaleX(0.8308);transform-origin:0 0;">U</div>
<div class="a" style="left:125px;top:71px;width:5px;height:0.8px;background:#a8a8a8;"></div>
<svg style="left:135px;top:66px" width="4" height="3" viewBox="0 0 4 3"><path d="M0.3 0.6h3.4l-1.7 1.8z" fill="#a8a8a8" opacity="0.8"/></svg>
<div class="a" style="left:143px;top:62px;width:1px;height:11px;background:#dadada;"></div>
<svg style="left:148px;top:62px" width="9" height="9" viewBox="0 0 9 9"><rect x="0.5" y="0.5" width="8" height="8" fill="none" stroke="#b0b0b0" stroke-width="0.8"/><path d="M4.5 0.5v8M0.5 4.5h8" stroke="#b0b0b0" stroke-width="0.8"/></svg>
<svg style="left:161px;top:66px" width="4" height="3" viewBox="0 0 4 3"><path d="M0.3 0.6h3.4l-1.7 1.8z" fill="#a8a8a8" opacity="0.8"/></svg>
<div class="a" style="left:168px;top:62px;width:1px;height:11px;background:#dadada;"></div>
<svg style="left:173px;top:61px" width="9" height="10" viewBox="0 0 9 10"><path d="M1 5l4-4 3.5 3.5-4 4z" fill="none" stroke="#b0b0b0" stroke-width="0.8"/><path d="M1 9.5h7" stroke="#d0d0d0" stroke-width="1.2"/></svg>
<svg style="left:185px;top:66px" width="4" height="3" viewBox="0 0 4 3"><path d="M0.3 0.6h3.4l-1.7 1.8z" fill="#a8a8a8" opacity="0.8"/></svg>
<div class="t" style="left:194.50px;top:63.30px;font-size:8.5px;line-height:8.5px;color:#a8a8a8;transform:scaleX(1.0582);transform-origin:0 0;">A</div>
<svg style="left:206px;top:66px" width="4" height="3" viewBox="0 0 4 3"><path d="M0.3 0.6h3.4l-1.7 1.8z" fill="#a8a8a8" opacity="0.8"/></svg>
<div class="t" style="left:141.25px;top:81.65px;font-size:7.5px;line-height:7.5px;color:#555555;transform:scaleX(0.9662);transform-origin:0 0;">Font</div>
<svg style="left:206px;top:83px" width="5" height="5" viewBox="0 0 5 5"><path d="M0.5 0.5h3M0.5 0.5v3M1.5 1.5l3 3M4.5 2.5v2h-2" stroke="#aaa" stroke-width="0.7" fill="none"/></svg>
<svg style="left:218px;top:44px" width="12" height="8" viewBox="0 0 12 8"><rect x="0" y="0.00" width="10" height="0.75" fill="#c2c2c2"/><rect x="0" y="2.10" width="10" height="0.75" fill="#c2c2c2"/><rect x="0" y="4.20" width="10" height="0.75" fill="#c2c2c2"/></svg>
<svg style="left:230px;top:47px" width="12" height="8" viewBox="0 0 12 8"><rect x="0" y="0.00" width="10" height="0.75" fill="#c2c2c2"/><rect x="0" y="2.10" width="10" height="0.75" fill="#c2c2c2"/><rect x="0" y="4.20" width="10" height="0.75" fill="#c2c2c2"/></svg>
<svg style="left:243px;top:49.8px" width="12" height="8" viewBox="0 0 12 8"><rect x="0" y="0.00" width="10" height="0.75" fill="#c2c2c2"/><rect x="0" y="2.10" width="10" height="0.75" fill="#c2c2c2"/><rect x="0" y="4.20" width="10" height="0.75" fill="#c2c2c2"/></svg>
<div class="a" style="left:257px;top:43px;width:1px;height:11px;background:#dadada;"></div>
<svg style="left:261px;top:44px" width="14" height="10" viewBox="0 0 14 10"><path d="M1 8l6-6M3 2h4v4" stroke="#b0b0b0" stroke-width="0.9" fill="none"/><text x="0" y="7" font-size="6" fill="#b0b0b0" font-family="Liberation Sans">ab</text></svg>
<svg style="left:273.5px;top:48px" width="4" height="3" viewBox="0 0 4 3"><path d="M0.3 0.6h3.4l-1.7 1.8z" fill="#a8a8a8" opacity="0.8"/></svg>
<div class="a" style="left:287px;top:43px;width:1px;height:11px;background:#dadada;"></div>
<svg style="left:291px;top:44px" width="10" height="9" viewBox="0 0 10 9"><rect x="0.5" y="0.5" width="3" height="8" fill="none" stroke="#c0c0c0" stroke-width="0.8"/><path d="M4 2h5M4 4.5h4l-1-1M7 4.5l-1 1M4 7h3" stroke="#b0b0b0" stroke-width="0.8" fill="none"/></svg>
<div class="t" style="left:303.50px;top:46.15px;font-size:7.5px;line-height:7.5px;color:#a8a8a8;transform:scaleX(0.9108);transform-origin:0 0;">Wrap Text</div>
<svg style="left:218px;top:64px" width="12" height="8" viewBox="0 0 12 8"><rect x="0" y="0.00" width="10" height="0.75" fill="#c2c2c2"/><rect x="0" y="1.80" width="7" height="0.75" fill="#c2c2c2"/><rect x="0" y="3.60" width="10" height="0.75" fill="#c2c2c2"/><rect x="0" y="5.40" width="7" height="0.75" fill="#c2c2c2"/></svg>
<svg style="left:231px;top:64px" width="12" height="8" viewBox="0 0 12 8"><rect x="0" y="0.00" width="10" height="0.75" fill="#c2c2c2"/><rect x="1.5" y="1.80" width="7" height="0.75" fill="#c2c2c2"/><rect x="0" y="3.60" width="10" height="0.75" fill="#c2c2c2"/><rect x="1.5" y="5.40" width="7" height="0.75" fill="#c2c2c2"/></svg>
<svg style="left:243px;top:64px" width="12" height="8" viewBox="0 0 12 8"><rect x="0" y="0.00" width="10" height="0.75" fill="#c2c2c2"/><rect x="3" y="1.80" width="7" height="0.75" fill="#c2c2c2"/><rect x="0" y="3.60" width="10" height="0.75" fill="#c2c2c2"/><rect x="3" y="5.40" width="7" height="0.75" fill="#c2c2c2"/></svg>
<div class="a" style="left:257px;top:62px;width:1px;height:11px;background:#dadada;"></div>
<svg style="left:261px;top:62px" width="24" height="9" viewBox="0 0 24 9"><path d="M0 1h10M4 3.5h6M4 5.5h6M0 8h10M13 1h10M17 3.5h6M17 5.5h6M13 8h10" stroke="#b4b4b4" stroke-width="0.8"/><path d="M0 4.5l2.5-1.5v3z M16 4.5l-2.5-1.5v3z" fill="#999"/></svg>
<svg style="left:291px;top:62px" width="10" height="9" viewBox="0 0 10 9"><rect x="0.5" y="0.5" width="8.5" height="8" fill="none" stroke="#b8b8b8" stroke-width="0.8"/><path d="M0.5 3h8.5M0.5 6h8.5M2 4.5h5.5" stroke="#b8b8b8" stroke-width="0.7"/></svg>
<div class="t" style="left:303.50px;top:64.15px;font-size:7.5px;line-height:7.5px;color:#a8a8a8;transform:scaleX(0.9350);transform-origin:0 0;">Merge &amp; Center</div>
<svg style="left:360.5px;top:67px" width="4" height="3" viewBox="0 0 4 3"><path d="M0.3 0.6h3.4l-1.7 1.8z" fill="#a8a8a8" opacity="0.8"/></svg>
<div class="t" style="left:270.00px;top:81.65px;font-size:7.5px;line-height:7.5px;color:#555555;transform:scaleX(0.9295);transform-origin:0 0;">Alignment</div>
<svg style="left:359px;top:83px" width="5" height="5" viewBox="0 0 5 5"><path d="M0.5 0.5h3M0.5 0.5v3M1.5 1.5l3 3M4.5 2.5v2h-2" stroke="#aaa" stroke-width="0.7" fill="none"/></svg>
<div class="a" style="left:369.5px;top:42.5px;width:75px;height:12px;background:#fff;border:1px solid #d4d4d4"></div>
<div class="a" style="left:439px;top:43.5px;width:6px;height:11px;background:#ececec;"></div>
<svg style="left:440px;top:48px" width="4" height="3" viewBox="0 0 4 3"><path d="M0.3 0.6h3.4l-1.7 1.8z" fill="#bbb" opacity="0.8"/></svg>
<div class="t" style="left:374.50px;top:63.38px;font-size:9px;line-height:9px;color:#a8a8a8;">$</div>
<svg style="left:384px;top:66.5px" width="4" height="3" viewBox="0 0 4 3"><path d="M0.3 0.6h3.4l-1.7 1.8z" fill="#a8a8a8" opacity="0.8"/></svg>
<div class="t" style="left:392.50px;top:64.23px;font-size:8px;line-height:8px;color:#a8a8a8;transform:scaleX(0.9841);transform-origin:0 0;">%</div>
<div class="t" style="left:407.00px;top:62.23px;font-size:8px;line-height:8px;color:#a8a8a8;transform:scaleX(0.8999);transform-origin:0 0;">,</div>
<div class="a" style="left:418px;top:62px;width:1px;height:11px;background:#dadada;"></div>
<svg style="left:422px;top:62px" width="22" height="10" viewBox="0 0 22 10"><text x="0" y="4.5" font-size="5" fill="#aaa" font-family="Liberation Sans">←.0</text><text x="2" y="9.5" font-size="5" fill="#aaa" font-family="Liberation Sans">.00</text><text x="13" y="4.5" font-size="5" fill="#aaa" font-family="Liberation Sans">.00</text><text x="12" y="9.5" font-size="5" fill="#aaa" font-family="Liberation Sans">→.0</text></svg>
<div class="t" style="left:391.55px;top:81.65px;font-size:7.5px;line-height:7.5px;color:#555555;transform:scaleX(0.8809);transform-origin:0 0;">Number</div>
<svg style="left:441px;top:83px" width="5" height="5" viewBox="0 0 5 5"><path d="M0.5 0.5h3M0.5 0.5v3M1.5 1.5l3 3M4.5 2.5v2h-2" stroke="#aaa" stroke-width="0.7" fill="none"/></svg>
<svg style="left:463px;top:40px" width="19" height="19" viewBox="0 0 19 19"><g stroke="#c4c4c4" stroke-width="0.8" fill="none"><rect x="0.5" y="0.5" width="16" height="14.5"/><path d="M0.5 4h16M0.5 7.5h16M0.5 11h16M4.5 0.5v14.5M9.5 0.5v14.5"/></g><rect x="5" y="1" width="4.5" height="10" fill="#9a9a9a"/><rect x="10" y="11.5" width="8" height="7" fill="#fff" stroke="#b0b0b0" stroke-width="0.8"/><path d="M12 14h4M12 16h3" stroke="#aaa" stroke-width="0.7"/></svg>
<div class="t" style="left:454.90px;top:61.55px;font-size:7.5px;line-height:7.5px;color:#a8a8a8;transform:scaleX(0.9327);transform-origin:0 0;">Conditional</div>
<div class="t" style="left:452.75px;top:70.65px;font-size:7.5px;line-height:7.5px;color:#a8a8a8;transform:scaleX(0.9625);transform-origin:0 0;">Formatting</div>
<svg style="left:488.5px;top:73px" width="4" height="3" viewBox="0 0 4 3"><path d="M0.3 0.6h3.4l-1.7 1.8z" fill="#c0c0c0" opacity="0.8"/></svg>
<svg style="left:496px;top:40px" width="24" height="19" viewBox="0 0 24 19"><g stroke="#c4c4c4" stroke-width="0.8" fill="none"><rect x="0.5" y="0.5" width="16" height="13"/><path d="M0.5 3.5h16M0.5 6.5h16M0.5 9.5h16M5.5 0.5v13M11 0.5v13"/></g><rect x="1" y="1" width="15" height="2.3" fill="#e8b8b8" opacity="0.5"/><rect x="1" y="4" width="15" height="9" fill="#d6d6d6" opacity="0.6"/><path d="M20.5 4l-7 9-2.5 3.5 4-2 7-9z" fill="#9a9a9a"/></svg>
<div class="t" style="left:494.85px;top:61.55px;font-size:7.5px;line-height:7.5px;color:#a8a8a8;transform:scaleX(0.8739);transform-origin:0 0;">Format as</div>
<div class="t" style="left:499.75px;top:70.65px;font-size:7.5px;line-height:7.5px;color:#a8a8a8;transform:scaleX(0.9202);transform-origin:0 0;">Table</div>
<svg style="left:517.5px;top:73px" width="4" height="3" viewBox="0 0 4 3"><path d="M0.3 0.6h3.4l-1.7 1.8z" fill="#c0c0c0" opacity="0.8"/></svg>
<svg style="left:529px;top:40px" width="22" height="19" viewBox="0 0 22 19"><g stroke="#c4c4c4" stroke-width="0.8" fill="none"><rect x="0.5" y="0.5" width="16" height="13"/><path d="M0.5 3.5h16M0.5 6.5h16M0.5 9.5h16M5.5 0.5v13M11 0.5v13"/></g><rect x="3" y="4" width="10" height="7" fill="#cfcfcf"/><path d="M19.5 4l-7 9-2.5 3.5 4-2 7-9z" fill="#9a9a9a"/></svg>
<div class="t" style="left:532.80px;top:61.55px;font-size:7.5px;line-height:7.5px;color:#a8a8a8;transform:scaleX(0.8514);transform-origin:0 0;">Cell</div>
<div class="t" style="left:528.00px;top:70.65px;font-size:7.5px;line-height:7.5px;color:#a8a8a8;transform:scaleX(0.8324);transform-origin:0 0;">Styles</div>
<svg style="left:546.5px;top:73px" width="4" height="3" viewBox="0 0 4 3"><path d="M0.3 0.6h3.4l-1.7 1.8z" fill="#c0c0c0" opacity="0.8"/></svg>
<div class="t" style="left:492.75px;top:81.65px;font-size:7.5px;line-height:7.5px;color:#555555;transform:scaleX(0.8079);transform-origin:0 0;">Styles</div>
<svg style="left:561px;top:41px" width="19" height="19" viewBox="0 0 19 19"><g stroke="#a8a8a8" stroke-width="0.7" fill="none"><rect x="0.5" y="0.5" width="7" height="4.5"/><rect x="0.5" y="5" width="7" height="4.5"/><rect x="0.5" y="9.5" width="7" height="5"/></g><g stroke="#a8a8a8" stroke-width="0.7" fill="none"><rect x="8.5" y="5" width="7" height="4.5"/></g><path d="M3 7.2h5l-1.5-1.5" stroke="#888" stroke-width="0.7" fill="none"/></svg>
<svg style="left:584px;top:41px" width="19" height="19" viewBox="0 0 19 19"><g stroke="#a8a8a8" stroke-width="0.7" fill="none"><rect x="0.5" y="0.5" width="7" height="4.5"/><rect x="0.5" y="5" width="7" height="4.5"/><rect x="0.5" y="9.5" width="7" height="5"/></g><path d="M9 3.5l7 7M16 3.5l-7 7" stroke="#a0a0a0" stroke-width="0.8"/></svg>
<svg style="left:609px;top:41px" width="19" height="19" viewBox="0 0 19 19"><g stroke="#9a9a9a" stroke-width="0.7" fill="none"><rect x="0.5" y="3" width="17" height="12"/><path d="M6.5 3v12M11.5 3v12M0.5 7h17M0.5 11h17"/></g><rect x="6.5" y="7" width="5" height="4" fill="#2b5797"/><path d="M1 1h16" stroke="#3d7fc1" stroke-width="0.9"/><path d="M2 0v2M16 0v2" stroke="#3d7fc1" stroke-width="0.7"/><ellipse cx="4" cy="16.5" rx="3.5" ry="1.5" fill="none" stroke="#888" stroke-width="0.7"/></svg>
<div class="t" style="left:560.50px;top:61.55px;font-size:7.5px;line-height:7.5px;color:#444444;transform:scaleX(0.9063);transform-origin:0 0;">Insert</div>
<svg style="left:567px;top:72px" width="4" height="3" viewBox="0 0 4 3"><path d="M0.3 0.6h3.4l-1.7 1.8z" fill="#444444" opacity="0.8"/></svg>
<div class="t" style="left:584.05px;top:61.55px;font-size:7.5px;line-height:7.5px;color:#444444;transform:scaleX(0.8994);transform-origin:0 0;">Delete</div>
<svg style="left:592px;top:72px" width="4" height="3" viewBox="0 0 4 3"><path d="M0.3 0.6h3.4l-1.7 1.8z" fill="#444444" opacity="0.8"/></svg>
<div class="t" style="left:607.05px;top:61.55px;font-size:7.5px;line-height:7.5px;color:#444444;transform:scaleX(0.9472);transform-origin:0 0;">Format</div>
<svg style="left:616px;top:72px" width="4" height="3" viewBox="0 0 4 3"><path d="M0.3 0.6h3.4l-1.7 1.8z" fill="#444444" opacity="0.8"/></svg>
<div class="t" style="left:587.50px;top:81.65px;font-size:7.5px;line-height:7.5px;color:#555555;transform:scaleX(0.7798);transform-origin:0 0;">Cells</div>
<div class="t" style="left:639.00px;top:41.04px;font-size:10px;line-height:10px;color:#a8a8a8;transform:scaleX(1.2941);transform-origin:0 0;">Σ</div>
<div class="t" style="left:649.00px;top:42.15px;font-size:7.5px;line-height:7.5px;color:#a8a8a8;transform:scaleX(0.9400);transform-origin:0 0;">AutoSum</div>
<svg style="left:683px;top:44.5px" width="4" height="3" viewBox="0 0 4 3"><path d="M0.3 0.6h3.4l-1.7 1.8z" fill="#444444" opacity="0.8"/></svg>
<svg style="left:638px;top:53px" width="10" height="10" viewBox="0 0 10 10"><rect x="0.5" y="0.5" width="8.5" height="8.5" fill="#fff" stroke="#666" stroke-width="0.8"/><path d="M4.75 2.5v4.5M2.8 5l1.95 2 1.95-2" stroke="#2b6cb5" stroke-width="1" fill="none"/></svg>
<div class="t" style="left:649.00px;top:54.65px;font-size:7.5px;line-height:7.5px;color:#444444;transform:scaleX(0.9916);transform-origin:0 0;">Fill</div>
<svg style="left:659px;top:57px" width="4" height="3" viewBox="0 0 4 3"><path d="M0.3 0.6h3.4l-1.7 1.8z" fill="#444444" opacity="0.8"/></svg>
<svg style="left:638px;top:66px" width="10" height="9" viewBox="0 0 10 9"><path d="M1 5.5l4-4 3.5 3.5-3 3h-2.5z" fill="#e46b80"/><path d="M2 8.5h7" stroke="#aaa" stroke-width="0.7"/></svg>
<div class="t" style="left:649.40px;top:68.15px;font-size:7.5px;line-height:7.5px;color:#444444;transform:scaleX(0.8648);transform-origin:0 0;">Clear</div>
<svg style="left:666px;top:70.5px" width="4" height="3" viewBox="0 0 4 3"><path d="M0.3 0.6h3.4l-1.7 1.8z" fill="#444444" opacity="0.8"/></svg>
<svg style="left:691px;top:40px" width="21" height="19" viewBox="0 0 21 19"><text x="1" y="8" font-size="9" fill="#b6b6b6" font-family="Liberation Sans">A</text><text x="1" y="17" font-size="9" fill="#b6b6b6" font-family="Liberation Sans">Z</text><path d="M9 4h11l-4 5v6l-3-1.5v-4.5z" fill="#b6b6b6"/></svg>
<div class="t" style="left:692.05px;top:61.55px;font-size:7.5px;line-height:7.5px;color:#a8a8a8;transform:scaleX(0.9356);transform-origin:0 0;">Sort &amp;</div>
<div class="t" style="left:692.25px;top:70.65px;font-size:7.5px;line-height:7.5px;color:#a8a8a8;transform:scaleX(0.8700);transform-origin:0 0;">Filter</div>
<svg style="left:707.5px;top:73px" width="4" height="3" viewBox="0 0 4 3"><path d="M0.3 0.6h3.4l-1.7 1.8z" fill="#c0c0c0" opacity="0.8"/></svg>
<svg style="left:718px;top:40px" width="19" height="19" viewBox="0 0 19 19"><circle cx="11.5" cy="7" r="5.6" fill="none" stroke="#2b6cb5" stroke-width="1.5"/><path d="M7.5 11l-6 6" stroke="#2b6cb5" stroke-width="2.4" stroke-linecap="round"/></svg>
<div class="t" style="left:716.00px;top:61.55px;font-size:7.5px;line-height:7.5px;color:#444444;transform:scaleX(0.9688);transform-origin:0 0;">Find &amp;</div>
<div class="t" style="left:716.00px;top:70.65px;font-size:7.5px;line-height:7.5px;color:#444444;transform:scaleX(0.9115);transform-origin:0 0;">Select</div>
<svg style="left:735.5px;top:73px" width="4" height="3" viewBox="0 0 4 3"><path d="M0.3 0.6h3.4l-1.7 1.8z" fill="#444444" opacity="0.8"/></svg>
<div class="t" style="left:677.00px;top:81.65px;font-size:7.5px;line-height:7.5px;color:#555555;transform:scaleX(0.9157);transform-origin:0 0;">Editing</div>
<svg style="left:785px;top:82px" width="8" height="5" viewBox="0 0 8 5"><path d="M1 4l3-3 3 3" stroke="#555" stroke-width="1" fill="none"/></svg>
<div class="t" style="left:8.00px;top:100.25px;font-size:7.5px;line-height:7.5px;color:#444;transform:scaleX(0.8866);transform-origin:0 0;">C5</div>
<svg style="left:55.5px;top:102.5px" width="4" height="3" viewBox="0 0 4 3"><path d="M0.3 0.6h3.4l-1.7 1.8z" fill="#666" opacity="0.8"/></svg>
<svg style="left:71px;top:98px" width="3" height="12" viewBox="0 0 3 12"><circle cx="1.5" cy="2" r="0.5" fill="#bbb"/><circle cx="1.5" cy="4.5" r="0.5" fill="#bbb"/><circle cx="1.5" cy="7" r="0.5" fill="#bbb"/><circle cx="1.5" cy="9.5" r="0.5" fill="#bbb"/></svg>
<svg style="left:88px;top:100px" width="8" height="8" viewBox="0 0 8 8"><path d="M1 1l6 6M7 1l-6 6" stroke="#bdbdbd" stroke-width="0.9"/></svg>
<svg style="left:106px;top:100px" width="9" height="8" viewBox="0 0 9 8"><path d="M1 4.5l2.5 2.5 4.5-6" stroke="#bdbdbd" stroke-width="0.9" fill="none"/></svg>
<div class="t" style="left:130.00px;top:100.23px;font-size:8px;line-height:8px;color:#555;font-style:italic;">f</div>
<div class="t" style="left:133.50px;top:102.84px;font-size:5.5px;line-height:5.5px;color:#555;font-style:italic;">x</div>
<svg style="left:785px;top:101px" width="7" height="5" viewBox="0 0 7 5"><path d="M1 1l2.5 2.5 2.5-2.5" stroke="#666" stroke-width="0.9" fill="none"/></svg>
<div class="a" style="left:785px;top:112px;width:11px;height:285px;background:#e8e8e8;"></div>
<div class="a" style="left:785px;top:112px;width:1px;height:285px;background:#d0d0d0;"></div>
<div class="a" style="left:786.5px;top:120px;width:8.5px;height:7px;background:#fff;"></div>
<svg style="left:787.5px;top:122px" width="7" height="4" viewBox="0 0 7 4"><path d="M1 3l2.5-2.5 2.5 2.5z" fill="#555"/></svg>
<div class="a" style="left:786.5px;top:127.5px;width:8.5px;height:40px;background:#fff;"></div>
<div class="a" style="left:786.5px;top:389px;width:8.5px;height:7.5px;background:#fff;"></div>
<svg style="left:787.5px;top:391px" width="7" height="4" viewBox="0 0 7 4"><path d="M1 1h5l-2.5 2.5z" fill="#555"/></svg>
<div class="a" style="left:0px;top:397px;width:796px;height:16px;background:#ebebeb;"></div>
<div class="a" style="left:0px;top:397px;width:796px;height:1px;background:#cfcfcf;"></div>
<svg style="left:14px;top:401px" width="6" height="8" viewBox="0 0 6 8"><path d="M4.5 1.5l-3 2.5 3 2.5z" fill="#c4c4c4"/></svg>
<svg style="left:31px;top:401px" width="6" height="8" viewBox="0 0 6 8"><path d="M1.5 1.5l3 2.5-3 2.5z" fill="#c4c4c4"/></svg>
<div class="a" style="left:59px;top:400px;width:1px;height:12px;background:#c6c6c6;"></div>
<div class="t" style="left:68.25px;top:401.73px;font-size:8px;line-height:8px;color:#444;-webkit-text-stroke:0.05px currentColor;transform:scaleX(0.9650);transform-origin:0 0;">Help Instructions</div>
<div class="a" style="left:137px;top:397px;width:44px;height:14.5px;background:#fff;"></div>
<div class="a" style="left:137px;top:410px;width:44px;height:1.5px;background:#217346;"></div>
<div class="a" style="left:136px;top:397px;width:1px;height:15px;background:#c6c6c6;"></div>
<div class="a" style="left:181px;top:397px;width:1px;height:15px;background:#c6c6c6;"></div>
<div class="t" style="left:144.00px;top:400.73px;font-size:8px;line-height:8px;color:#217346;-webkit-text-stroke:0px currentColor;font-weight:bold;transform:scaleX(0.8544);transform-origin:0 0;">GSTR-3B</div>
<svg style="left:199px;top:399px" width="12" height="12" viewBox="0 0 12 12"><circle cx="6" cy="6" r="4.8" fill="none" stroke="#777" stroke-width="0.9"/><path d="M6 3.5v5M3.5 6h5" stroke="#777" stroke-width="0.9"/></svg>
<svg style="left:521px;top:401px" width="3" height="10" viewBox="0 0 3 10"><circle cx="1.5" cy="1.5" r="0.5" fill="#aaa"/><circle cx="1.5" cy="4" r="0.5" fill="#aaa"/><circle cx="1.5" cy="6.5" r="0.5" fill="#aaa"/><circle cx="1.5" cy="9" r="0.5" fill="#aaa"/></svg>
<div class="a" style="left:532px;top:401px;width:243px;height:8.5px;background:#dedede;"></div>
<div class="a" style="left:532.5px;top:401px;width:8px;height:7.5px;background:#fff;border:0.5px solid #c8c8c8"></div>
<svg style="left:534px;top:402.5px" width="5" height="5" viewBox="0 0 5 5"><path d="M3.5 0.5l-2.5 2 2.5 2z" fill="#555"/></svg>
<div class="a" style="left:541px;top:401px;width:196.5px;height:7.5px;background:#fff;border:0.5px solid #c8c8c8"></div>
<div class="a" style="left:774px;top:401px;width:8px;height:7.5px;background:#fff;border:0.5px solid #c8c8c8"></div>
<svg style="left:776px;top:402.5px" width="5" height="5" viewBox="0 0 5 5"><path d="M1.5 0.5l2.5 2-2.5 2z" fill="#555"/></svg>
<div class="a" style="left:0px;top:412.6px;width:798px;height:1.8px;background:#e4e9ee;"></div>
<div class="a" style="left:0px;top:414.4px;width:798px;height:1.7px;background:#8ba7d8;"></div>
<div class="a" style="left:0px;top:416.1px;width:798px;height:1px;background:#ffffff;"></div>
<div class="a" style="left:0px;top:0px;width:1.5px;height:36px;background:#a9c2e8;"></div>
<div class="a" style="left:0px;top:36px;width:1.8px;height:381px;background:#98b6e4;"></div>
<div class="a" style="left:1.8px;top:36px;width:1.2px;height:381px;background:#e8eef6;"></div>
<div class="a" style="left:796px;top:0px;width:2px;height:417px;background:#b6c8e6;"></div>
<div class="a" style="left:0px;top:0px;width:798px;height:1px;background:#dfe6f2;"></div>
</body></html>
